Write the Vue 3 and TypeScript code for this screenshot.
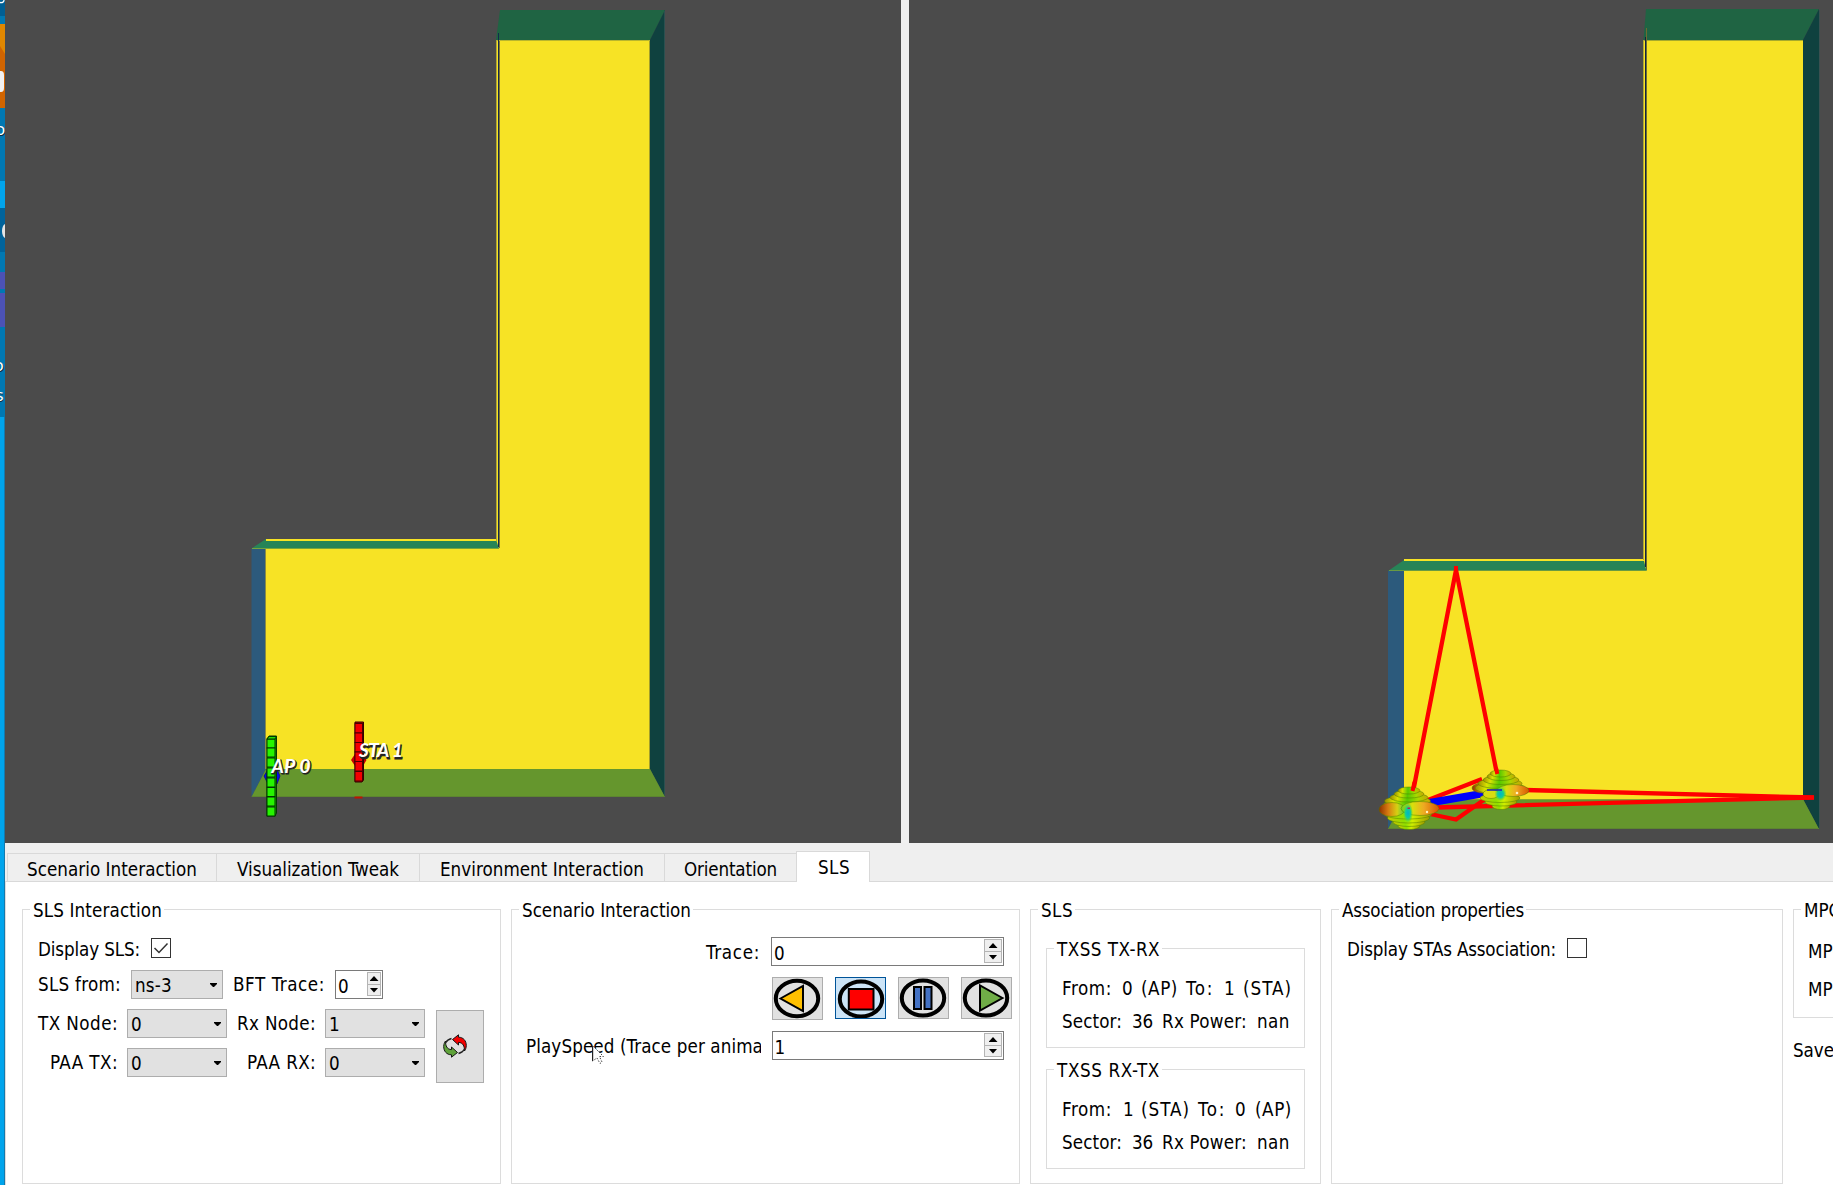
<script setup lang="ts">
import type { Directive } from 'vue'

// Spreads a label's letters so that it occupies the given number of pixels.
const vFit: Directive<HTMLElement, number> = {
  mounted(el, { value }) {
    const n = (el.textContent ?? '').length
    const natural = el.getBoundingClientRect().width
    el.style.letterSpacing = `${(value - natural) / n}px`
  },
}

const tabs = [
  { label: 'Scenario Interaction', box: 209, fit: 170 },
  { label: 'Visualization Tweak', box: 203, fit: 162 },
  { label: 'Environment Interaction', box: 245, fit: 204 },
  { label: 'Orientation', box: 132, fit: 93 },
]

type Word = [text: string, width: number, left: number]

const sweeps: { title: string; top: Word[] }[] = [
  {
    title: 'TXSS TX-RX',
    top: [['From:', 50, 1062], ['0', 11, 1122], ['(AP)', 37, 1141], ['To:', 28, 1186], ['1', 11, 1224], ['(STA)', 49, 1243]],
  },
  {
    title: 'TXSS RX-TX',
    top: [['From:', 50, 1062], ['1', 11, 1123], ['(STA)', 49, 1141], ['To:', 28, 1198], ['0', 11, 1235], ['(AP)', 37, 1255]],
  },
]
const sectorRow: Word[] = [['Sector:', 60, 1062], ['36', 21, 1132], ['Rx Power:', 85, 1162], ['nan', 33, 1257]]

const gapBefore = (row: Word[], i: number): number =>
  i === 0 ? 0 : row[i][2] - row[i - 1][2] - row[i - 1][1]

const greenCells = [739, 748, 758, 768, 778, 787.5, 797, 807]
const redCells = [723.5, 733, 742.5, 752, 761.5, 771.5]

interface Ring { x: number; y: number; rx: number; ry: number; f: string }
const lobes: Ring[][] = [
  [
    { x: 1409, y: 826, rx: 11, ry: 3.5, f: 'url(#ringB)' },
    { x: 1409, y: 822, rx: 16, ry: 4.5, f: 'url(#ringB)' },
    { x: 1408.5, y: 818, rx: 21, ry: 5, f: 'url(#ringB)' },
    { x: 1408, y: 814, rx: 24, ry: 5, f: 'url(#ringB)' },
    { x: 1408, y: 805, rx: 25, ry: 6, f: 'url(#ringA)' },
    { x: 1407.5, y: 801, rx: 23, ry: 5, f: 'url(#ringA)' },
    { x: 1409, y: 797.5, rx: 19, ry: 4.5, f: 'url(#ringA)' },
    { x: 1409, y: 794, rx: 15, ry: 4, f: 'url(#ringA)' },
    { x: 1409, y: 790.5, rx: 11, ry: 3.5, f: 'url(#ringA)' },
    { x: 1392, y: 809.5, rx: 13, ry: 7, f: 'url(#lobeL)' },
    { x: 1420, y: 808.5, rx: 19, ry: 7, f: 'url(#lobeR)' },
  ],
  [
    { x: 1501, y: 806, rx: 9, ry: 3.5, f: 'url(#ringB)' },
    { x: 1501, y: 802, rx: 16, ry: 4, f: 'url(#ringB)' },
    { x: 1500, y: 798, rx: 20, ry: 4.5, f: 'url(#ringB)' },
    { x: 1483, y: 788, rx: 11, ry: 5, f: 'url(#lobeL)' },
    { x: 1500, y: 788, rx: 25, ry: 6, f: 'url(#ringA)' },
    { x: 1500, y: 783.5, rx: 22, ry: 5, f: 'url(#ringA)' },
    { x: 1501, y: 780, rx: 18, ry: 4.5, f: 'url(#ringA)' },
    { x: 1501, y: 776.5, rx: 14, ry: 4, f: 'url(#ringA)' },
    { x: 1500.5, y: 773.5, rx: 10.5, ry: 3.5, f: 'url(#ringA)' },
    { x: 1513, y: 790.5, rx: 16, ry: 6, f: 'url(#lobeR)' },
    { x: 1491, y: 794, rx: 8, ry: 4.5, f: '#d9dc10' },
  ],
]
</script>

<template>
  <div class="screen">
    <svg class="desktop" width="5" height="1185" viewBox="0 0 5 1185">
      <rect width="5" height="1185" fill="#00a4ec" />
      <rect width="5" height="417" fill="#0078b2" />
      <rect width="5" height="16" fill="#005f94" />
      <path d="M0 2.5Q4 3 4 0" fill="none" stroke="#fff" stroke-width="1.3" />
      <rect y="24" width="5" height="84" fill="#d06400" />
      <path d="M0 24H5V54L0 46Z" fill="#e08700" />
      <path d="M0 71H1Q4 71 4 75V88Q4 92 1 92H0Z" fill="#f2f2f2" />
      <rect y="181" width="5" height="27" fill="#00a4ec" />
      <rect y="208" width="5" height="44" fill="#00639b" />
      <path d="M5 224C1 226 1 236 5 238Z" fill="#e4e4e4" />
      <rect y="272" width="5" height="17" fill="#4c52b5" />
      <rect y="293" width="5" height="34" fill="#4c52b5" />
      <g class="icon-name shadow">
        <text x="-4" y="136">o</text>
        <text x="-5.5" y="371.500">o</text>
        <text x="-4" y="402">s</text>
      </g>
      <g class="icon-name">
        <text x="-5" y="135">o</text>
        <text x="-6.500" y="370.500">o</text>
        <text x="-4.500" y="401">s</text>
      </g>
      <path d="M4.5 417V1185" stroke="#1479ad" />
    </svg>

    <div class="window">
      <div class="views">
        <svg class="view" width="896" height="843" viewBox="5 0 896 843">
          <path d="M496 40H650V769H266V539H496Z" fill="#f7e325" />
          <path d="M500 10H665L650 40H496Z" fill="#1f6443" />
          <path d="M665 10V797L650 769V40Z" fill="#0f413f" />
          <path d="M664.5 11V796" stroke="#2b5050" fill="none" />
          <path d="M649.5 40V769" stroke="#a39d2a" fill="none" />
          <path d="M496 40.5H650" stroke="#b9b62d" fill="none" />
          <path d="M251.500 548H266V769L251.500 797Z" fill="#2c5a7c" />
          <path d="M266 541H496.500L499 548.500H251.500L266 539Z" fill="#278457" />
          <path d="M266 540H497" stroke="#f7e325" stroke-width="2" />
          <path d="M252 548.5H499" stroke="#75a33f" />
          <path d="M265.5 549V769" stroke="#8a8c45" />
          <path d="M496.500 40V541" stroke="#b0a536" />
          <path d="M498.500 33V547" stroke="#142a4c" />
          <path d="M499.500 41V548" stroke="#80782f" />
          <path d="M266 769H650L665 797H251.500Z" fill="#65962d" />
          <path d="M252 796.5H664" stroke="#5d8530" />
          <path d="M268 769.500H277L280 776L277 784H268L264 776Z" fill="#0808e8" stroke="#06067a" stroke-width=".7" />
          <path d="M267 739L269 736H276.500V813L275 816H267Z" fill="#1ca000" stroke="#003c00" />
          <g v-for="y in greenCells" :key="'g' + y">
            <rect x="267" :y="y" width="8" height="9" fill="#26f500" stroke="#003500" stroke-width="1" />
          </g>
          <path d="M267 739L269 736.500H276.500L275 739Z" fill="#26e000" stroke="#003500" />
          <path d="M351 760L355 754H363L366.500 760L363 766H355Z" fill="#c80000" />
          <path d="M355 723.500V722H363.500V780L362 782H355Z" fill="#a80000" stroke="#300" />
          <g v-for="y in redCells" :key="'r' + y">
            <rect x="355" :y="y" width="7.500" height="9.500" fill="#f40000" stroke="#4b0000" />
          </g>
          <path d="M354.500 797.500H362.500" stroke="#c01500" stroke-width="2" />
          <g class="node-name">
            <text x="272.500" y="773.500" textLength="39" class="shade">AP 0</text>
            <text x="360" y="758.500" textLength="44" class="shade">STA 1</text>
            <text x="271.500" y="772.500" textLength="39">AP 0</text>
            <text x="359" y="757" textLength="44">STA 1</text>
          </g>
        </svg>
        <svg class="view" width="924" height="843" viewBox="909 0 924 843">
          <defs>
            <linearGradient id="ringA"><stop offset="0" stop-color="#9a8a00" /><stop offset=".2" stop-color="#d9e300" /><stop offset=".45" stop-color="#56c800" /><stop offset=".75" stop-color="#a8d800" /><stop offset="1" stop-color="#c9a400" /></linearGradient>
            <linearGradient id="ringB"><stop offset="0" stop-color="#c8c800" /><stop offset=".4" stop-color="#8fe000" /><stop offset=".6" stop-color="#d0ee00" /><stop offset="1" stop-color="#9f9a00" /></linearGradient>
            <linearGradient id="lobeL"><stop offset="0" stop-color="#8e3000" /><stop offset=".35" stop-color="#d87a10" /><stop offset=".7" stop-color="#d6d012" /><stop offset="1" stop-color="#48d040" /></linearGradient>
            <linearGradient id="lobeR"><stop offset="0" stop-color="#6ad020" /><stop offset=".3" stop-color="#d8e00c" /><stop offset=".6" stop-color="#eeaa22" /><stop offset="1" stop-color="#d95600" /></linearGradient>
            <radialGradient id="core"><stop offset="0" stop-color="#00b4c8" /><stop offset=".5" stop-color="#10cc98" /><stop offset="1" stop-color="#40d040" stop-opacity="0" /></radialGradient>
          </defs>
          <path d="M1643 40H1803V799H1404V559H1643Z" fill="#f7e325" />
          <path d="M1646 9H1819L1803 40H1643.500Z" fill="#1f6443" />
          <path d="M1819 9V829L1803 799V40Z" fill="#0f413f" />
          <path d="M1819.500 10V829" stroke="#3b5050" />
          <path d="M1644 40.500H1803" stroke="#a6aa2c" />
          <path d="M1388 571H1404V799L1388 829Z" fill="#2c5a7c" />
          <path d="M1404 561H1644L1646.500 571H1388L1404 560Z" fill="#278457" />
          <path d="M1404 560H1645" stroke="#f7e325" stroke-width="2" />
          <path d="M1389 570.500H1646.500" stroke="#689a43" />
          <path d="M1643.500 40V560" stroke="#b0a536" />
          <path d="M1645.500 37V567" stroke="#15233d" />
          <path d="M1646.500 28V570" stroke="#6c6c31" />
          <path d="M1404 799H1803L1819 829H1388Z" fill="#65962d" />
          <path d="M1404 799.500H1803" stroke="#8ba52b" />
          <path d="M1388 828.500H1819" stroke="#5d8530" />
          <g fill="none" stroke="#fe0000" stroke-width="4.300">
            <path d="M1413 792L1456 570L1497 774" stroke-linejoin="bevel" />
            <path d="M1525 790L1814 797.500L1436 807.500" stroke-linejoin="bevel" />
            <path d="M1428 800L1482 779" />
            <path d="M1430 814L1456 819.500L1488 797" />
          </g>
          <path d="M1454 568H1458M1806 797.500H1814" stroke="#fe0000" stroke-width="4" />
          <path d="M1428 803L1492 792" stroke="#0000fa" stroke-width="7.500" />
          <g v-for="(blob, b) in lobes" :key="b">
            <ellipse v-for="(r, i) in blob" :key="i" :cx="r.x" :cy="r.y" :rx="r.rx" :ry="r.ry" :fill="r.f" stroke="#4f7a00" stroke-opacity=".6" stroke-width=".8" />
          </g>
          <ellipse cx="1408" cy="813" rx="5" ry="10" fill="url(#core)" />
          <rect x="1407.500" y="807.500" width="2.500" height="1.500" fill="#c02050" />
          <ellipse cx="1500.500" cy="794" rx="6" ry="7" fill="url(#core)" />
          <path d="M1487 790H1502" stroke="#1a20b8" stroke-width="1.500" />
          <circle cx="1427" cy="812" r="1.200" fill="#fff4c0" />
          <circle cx="1517" cy="793" r="1.300" fill="#fff4c0" />
          <path d="M1412.500 791L1414.500 782M1496 768L1497.300 774" stroke="#fe0000" stroke-width="4" />
        </svg>
      </div>

      <div class="tabbar">
        <div v-for="t in tabs" :key="t.label" class="tab" :style="{ width: t.box + 'px' }">
          <span v-fit="t.fit">{{ t.label }}</span>
        </div>
        <div class="tab active"><span v-fit="32">SLS</span></div>
      </div>

      <div class="panel">
        <section class="group sls-interaction">
          <h3><span v-fit="129">SLS Interaction</span></h3>
          <div class="row display">
            <span v-fit="102">Display SLS:</span>
            <i class="check"><svg width="18" height="18" viewBox="0 0 18 18"><path d="M2.500 9L7 13.500L15.500 4.500" fill="none" stroke="#333" stroke-width="1.500" /></svg></i>
          </div>
          <div class="row source">
            <span v-fit="83">SLS from:</span>
            <div class="combo narrow"><span v-fit="37">ns-3</span><i class="caret" /></div>
            <span v-fit="92">BFT Trace:</span>
            <div class="spin small"><span>0</span><i class="steps"><b class="up" /><b class="down" /></i></div>
          </div>
          <div class="node-area">
            <div class="nodes">
              <div class="row">
                <div class="cap first"><span v-fit="80">TX Node:</span></div>
                <div class="combo"><span>0</span><i class="caret" /></div>
                <div class="cap"><span v-fit="79">Rx Node:</span></div>
                <div class="combo"><span>1</span><i class="caret" /></div>
              </div>
              <div class="row">
                <div class="cap first"><span v-fit="68">PAA TX:</span></div>
                <div class="combo"><span>0</span><i class="caret" /></div>
                <div class="cap"><span v-fit="69">PAA RX:</span></div>
                <div class="combo"><span>0</span><i class="caret" /></div>
              </div>
            </div>
            <button class="refresh">
              <svg width="24" height="24" viewBox="0 0 24 24">
                <g v-for="turn in [{ a: 0, f: '#f40000' }, { a: 180, f: '#5fa33a' }]" :key="turn.a" :transform="`rotate(${turn.a} 12 12)`">
                  <path d="M9.500 5.500L15.500 .8V3.200C20.500 3.200 23.300 7 23.300 11.500C23.200 14 22.500 15.500 21.500 17C21.500 12 20 8.600 15.500 8.400V11Z" :fill="turn.f" stroke="#151515" />
                  <path d="M21.500 15C20 18 18 19 15.500 19.500" fill="none" stroke="#222" stroke-width="1.300" />
                </g>
              </svg>
            </button>
          </div>
        </section>

        <section class="group scenario">
          <h3><span v-fit="169">Scenario Interaction</span></h3>
          <div class="row trace">
            <span v-fit="54">Trace:</span>
            <div class="spin wide"><span>0</span><i class="steps"><b class="up" /><b class="down" /></i></div>
          </div>
          <div class="player">
            <button class="tall"><svg width="49" height="41" viewBox="0 0 49 41"><ellipse cx="24" cy="20.500" rx="21.200" ry="17.800" /><path class="y" d="M7.500 20.500L30 8V33Z" /></svg></button>
            <button class="on"><svg width="49" height="40" viewBox="0 0 49 40"><ellipse cx="25" cy="21" rx="21.200" ry="17.500" /><path class="r" d="M12.800 11H37.500V31.500H12.800Z" /></svg></button>
            <button><svg width="49" height="40" viewBox="0 0 49 40"><ellipse cx="24" cy="20" rx="21.200" ry="17.500" /><path class="b" d="M15 9H22V31H15ZM25.500 9H32.500V31H25.500Z" /></svg></button>
            <button><svg width="49" height="40" viewBox="0 0 49 40"><ellipse cx="24" cy="20" rx="21.200" ry="17.500" /><path class="g" d="M40.500 20L18 7.500V32.500Z" /></svg></button>
          </div>
          <div class="row speed">
            <div class="clip"><span v-fit="237">PlaySpeed (Trace per anima</span></div>
            <div class="spin wide"><span>1</span><i class="steps"><b class="up" /><b class="down" /></i></div>
            <svg class="cursor" width="14" height="20" viewBox="0 0 14 20">
              <path d="M.5 .5L12 12H7.500L10 17.500L7.500 18.500L5 13L.5 16Z" fill="#fff" />
              <path d="M.6 1V16" stroke="#222" stroke-width="1.200" />
              <path d="M.5 .5L11.500 11.500H7.500L10 17L8 18.500L5 13L.5 16" fill="none" stroke="#444" stroke-dasharray="1.500 1.500" />
            </svg>
          </div>
        </section>

        <section class="group sls">
          <h3><span v-fit="32">SLS</span></h3>
          <section v-for="s in sweeps" :key="s.title" class="group sweep">
            <h3><span v-fit="103">{{ s.title }}</span></h3>
            <div class="line first-line">
              <div v-for="(w, i) in s.top" :key="i" :style="{ width: w[1] + 'px', marginLeft: gapBefore(s.top, i) + 'px' }"><span v-fit="w[1]">{{ w[0] }}</span></div>
            </div>
            <div class="line">
              <div v-for="(w, i) in sectorRow" :key="i" :style="{ width: w[1] + 'px', marginLeft: gapBefore(sectorRow, i) + 'px' }"><span v-fit="w[1]">{{ w[0] }}</span></div>
            </div>
          </section>
        </section>

        <section class="group assoc">
          <h3><span v-fit="182">Association properties</span></h3>
          <div class="row display">
            <span v-fit="209">Display STAs Association:</span>
            <i class="check" />
          </div>
        </section>

        <div class="last">
          <section class="group mpc">
            <h3><span>MPCs</span></h3>
            <div class="mp">MPCs</div>
            <div class="mp second">MPCs</div>
          </section>
          <div class="save"><span v-fit="41">Save</span></div>
        </div>
      </div>
    </div>
  </div>
</template>

<style>
body {
  margin: 0;
  overflow: hidden;
}
</style>

<style scoped>
* {
  box-sizing: border-box;
}
.screen {
  display: flex;
  width: 1833px;
  height: 1185px;
  overflow: hidden;
  background: #fff;
  color: #000;
  font-family: "DejaVu Sans Condensed", "DejaVu Sans", sans-serif;
  font-stretch: condensed;
  font-size: 18.67px;
  line-height: 22px;
  white-space: pre;
}
.desktop {
  flex: none;
}
.icon-name {
  font: 17px "Noto Sans", sans-serif;
  fill: #fff;
}
.icon-name.shadow {
  fill: #10303f;
}
.window {
  width: 1828px;
  flex: none;
  background: #fff;
}
.views {
  display: flex;
  gap: 8px;
  background: #f0f0f0;
}
.view {
  display: block;
  background: #4b4b4b;
}
.node-name {
  font: italic bold 19px Lato, sans-serif;
  fill: #fff;
}
.shade {
  fill: #222;
  stroke: #222;
  stroke-width: 1px;
}
span {
  display: inline-block;
}
.tabbar {
  height: 39px;
  background: #efefef;
  border-bottom: 1px solid #d9d9d9;
  display: flex;
  align-items: flex-end;
  padding-left: 2px;
}
.tab {
  height: 28px;
  border-top: 1px solid #d9d9d9;
  border-left: 1px solid #d9d9d9;
  display: flex;
  justify-content: center;
  padding-top: 5px;
}
.tab.active {
  width: 74px;
  height: 31px;
  margin-bottom: -1px;
  padding-left: 2px;
  border-right: 1px solid #d9d9d9;
  background: #fff;
}
.panel {
  height: 303px;
  padding: 27px 0 0 16px;
  border-left: 1px solid #dcdcdc;
  display: flex;
  overflow: hidden;
}
.group {
  flex: none;
  height: 275px;
  border: 1px solid #dcdcdc;
  margin-right: 10px;
}
h3 {
  font: inherit;
  margin: -10px 0 0 7px;
  padding: 0 2px 0 3px;
  height: 22px;
  width: max-content;
  background: #fff;
}
.row {
  display: flex;
  height: 29px;
  line-height: 30px;
}
.sls-interaction {
  width: 479px;
}
.display {
  margin: 12px 0 0 15px;
  line-height: 31px;
}
.check {
  width: 20px;
  height: 20px;
  border: 1px solid #333;
  margin: 4px 0 0 11px;
}
.check svg {
  display: block;
}
.source {
  margin: 7px 0 0 15px;
}
.combo {
  width: 100px;
  height: 29px;
  border: 1px solid #adadad;
  background: #e1e1e1;
  padding: 0 5px 0 3px;
  display: flex;
  justify-content: space-between;
}
.narrow {
  width: 92px;
  margin: 0 10px;
}
.caret {
  width: 7px;
  height: 4px;
  margin-top: 12px;
  background: #000;
  clip-path: polygon(0 0, 100% 0, 100% 25%, 57% 100%, 43% 100%, 0 25%);
}
.spin {
  height: 29px;
  border: 1px solid #7a7a7a;
  background: #fff;
  padding: 1px 1px 0 2px;
  display: flex;
  justify-content: space-between;
  line-height: 29px;
}
.small {
  width: 48px;
  margin-left: 10px;
}
.steps {
  width: 14px;
  height: 24px;
  border: 1px solid #b4b4b4;
  background: #efefef;
  display: flex;
  flex-direction: column;
}
.wide {
  width: 233px;
  margin-left: 11px;
}
.wide .steps {
  width: 18px;
}
.steps b {
  height: 11px;
  display: flex;
  align-items: center;
  justify-content: center;
}
.steps b + b {
  border-top: 1px solid #b4b4b4;
}
.steps b::after {
  content: "";
  width: 9px;
  height: 5px;
  background: #000;
}
.up::after {
  clip-path: polygon(50% 0, 100% 100%, 0 100%);
}
.down::after {
  clip-path: polygon(0 0, 100% 0, 50% 100%);
}
.node-area {
  display: flex;
  margin: 10px 0 0 15px;
}
.nodes .row + .row {
  margin-top: 10px;
}
.cap {
  width: 98px;
  padding-right: 9px;
  display: flex;
  justify-content: flex-end;
}
.cap.first {
  width: 89px;
}
button {
  border: 1px solid #adadad;
  background: #e1e1e1;
  padding: 0;
  margin: 0;
}
.refresh {
  width: 48px;
  height: 73px;
  margin: 1px 0 0 11px;
  display: flex;
  align-items: center;
  padding: 0 0 1px 6px;
}
.scenario {
  width: 509px;
}
.trace {
  margin: 15px 15px 0 0;
  line-height: 31px;
  justify-content: flex-end;
}
.player {
  display: flex;
  gap: 12px;
  height: 43px;
  margin: 11px 0 0 260px;
}
.player button {
  width: 51px;
  height: 42px;
}
.player button.tall {
  height: 43px;
}
.player button.on {
  background: #cce4f7;
  border-color: #005499;
}
.player svg {
  display: block;
  stroke: #000;
  stroke-width: 2px;
}
.player ellipse {
  fill: none;
  stroke-width: 4px;
}
.y { fill: #ffc000; }
.r { fill: #fe0000; }
.b { fill: #4472c4; }
.g { fill: #70ad47; }
.speed {
  margin: 11px 15px 0 14px;
  line-height: 31px;
  justify-content: flex-end;
  position: relative;
}
.clip {
  width: 235px;
  overflow: hidden;
}
.cursor {
  position: absolute;
  left: 66px;
  top: 14px;
}
.sls {
  width: 291px;
}
.sweep {
  width: 259px;
  height: 100px;
  margin: 26px 0 0 15px;
}
.sweep + .sweep {
  margin-top: 21px;
}
.line {
  display: flex;
  height: 22px;
  margin: 11px 0 0 15px;
}
.first-line {
  margin-top: 17px;
}
.assoc {
  width: 452px;
}
.last {
  width: 60px;
  flex: none;
}
.mpc {
  width: 200px;
  height: 109px;
}
.mp {
  margin: 19px 0 0 14px;
}
.second {
  margin-top: 16px;
}
.save {
  margin-top: 22px;
}
</style>
